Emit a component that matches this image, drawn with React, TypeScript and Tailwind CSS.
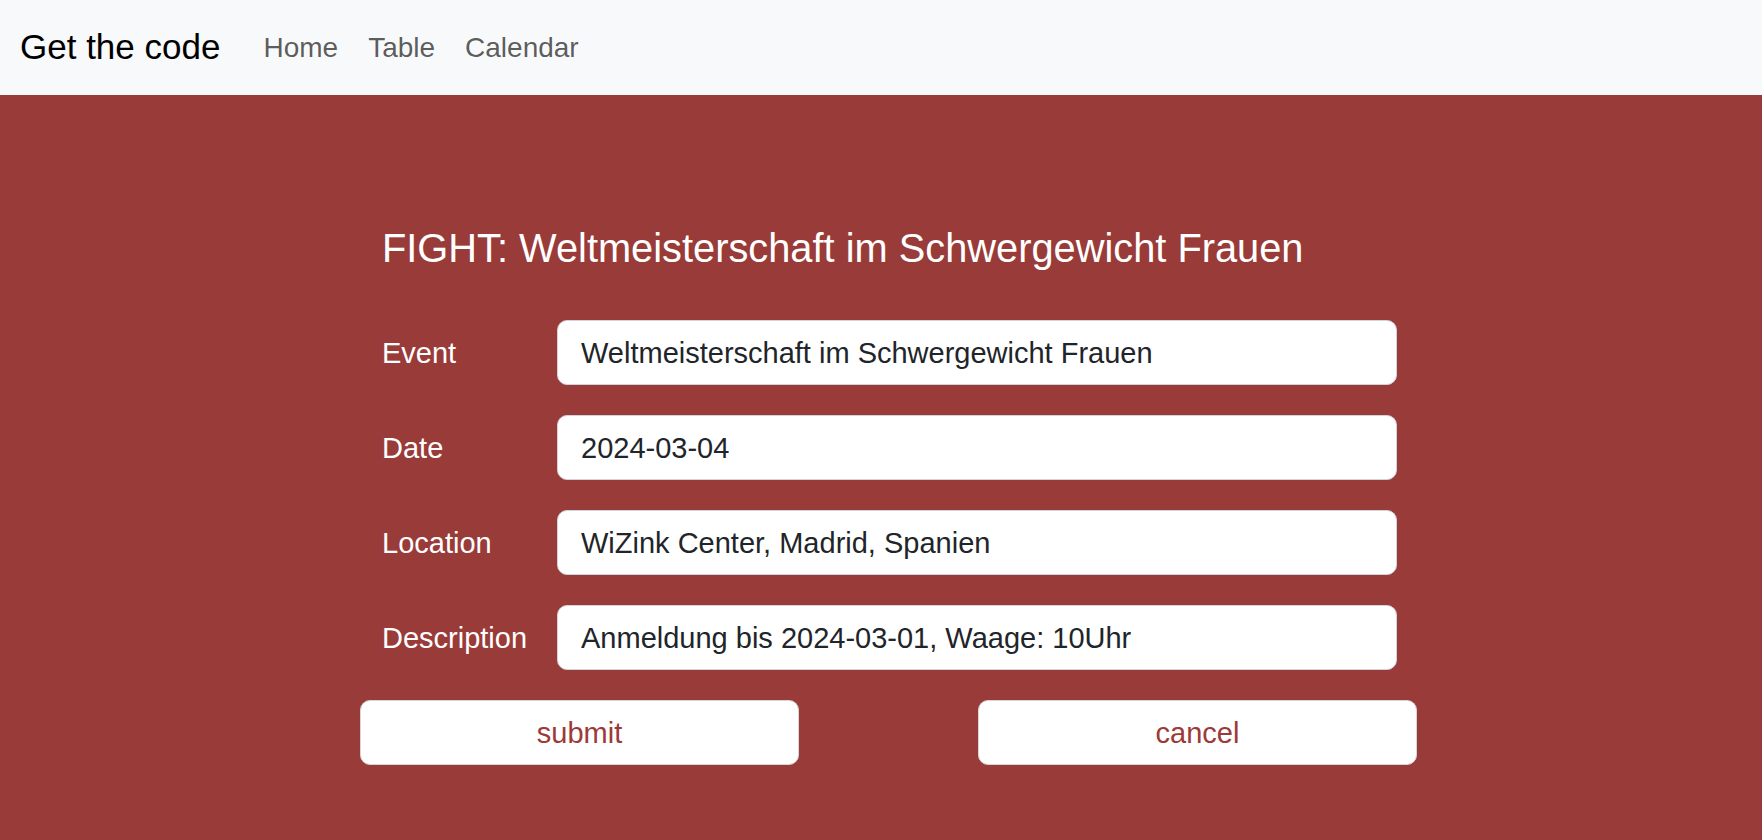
export default function App() {
  const rows = [
    { label: "Event", value: "Weltmeisterschaft im Schwergewicht Frauen" },
    { label: "Date", value: "2024-03-04" },
    { label: "Location", value: "WiZink Center, Madrid, Spanien" },
    { label: "Description", value: "Anmeldung bis 2024-03-01, Waage: 10Uhr" },
  ]

  return (
    <div className="min-h-screen flex flex-col bg-[#993b38] font-['Liberation_Sans',Arial,sans-serif]">
      {/* NAVBAR */}
      <nav className="h-[95px] shrink-0 bg-[#f8f9fa] flex items-center pl-[20px]">
        <span className="text-[35px] text-black mr-[28px]">Get the code</span>
        <a className="text-[28px] text-black/65 px-[15px]">Home</a>
        <a className="text-[28px] text-black/65 px-[15px]">Table</a>
        <a className="text-[28px] text-black/65 px-[15px]">Calendar</a>
      </nav>

      {/* FORM */}
      <div className="pl-[360px] pt-[129px]">
        <div className="w-[1057px]">
          <div className="pl-[22px] pr-[20px]">
            <h3 className="text-[39.8px] leading-[48px] text-white mb-[48px]">
              FIGHT: Weltmeisterschaft im Schwergewicht Frauen
            </h3>

            <div className="flex flex-col gap-[30px]">
              {rows.map((r) => (
                <div key={r.label} className="flex items-center">
                  <label className="w-[175px] shrink-0 pt-[2px] text-[29px] text-white">
                    {r.label}
                  </label>
                  <input
                    readOnly
                    value={r.value}
                    className="flex-1 h-[65px] bg-white border border-[#ced4da] rounded-[10px] px-[23px] pt-[2px] text-[29px] text-[#212529] outline-none"
                  />
                </div>
              ))}
            </div>
          </div>

          <div className="flex justify-between mt-[30px]">
            <button className="w-[439px] h-[65px] pt-[3px] bg-white border border-[#d6d6d6] rounded-[10px] text-[29px] text-[#9c3a37]">
              submit
            </button>
            <button className="w-[439px] h-[65px] pt-[3px] bg-white border border-[#d6d6d6] rounded-[10px] text-[29px] text-[#9c3a37]">
              cancel
            </button>
          </div>
        </div>
      </div>
    </div>
  )
}
